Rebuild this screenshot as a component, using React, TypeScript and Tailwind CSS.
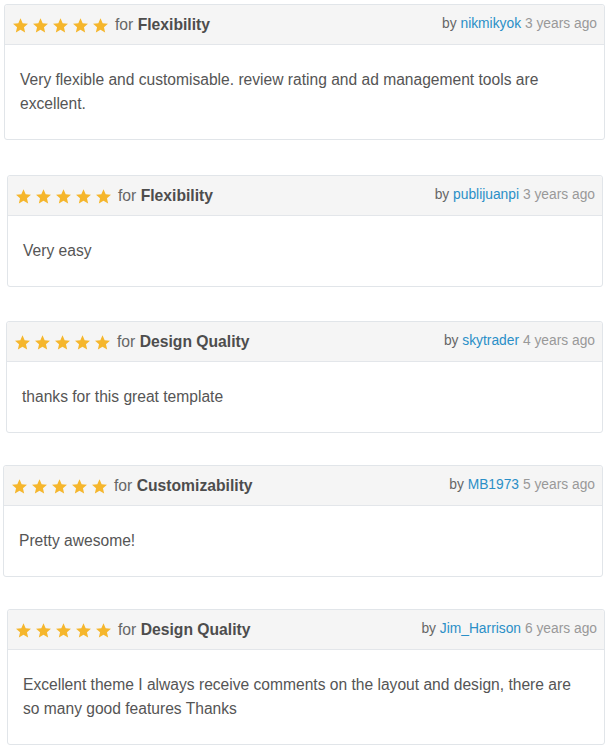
import React from 'react';

interface Review {
  rating: number;
  category: string;
  author: string;
  ago: string;
  text: string;
  wrap: string;
}

const reviews: Review[] = [
  {
    rating: 5,
    category: 'Flexibility',
    author: 'nikmikyok',
    ago: '3 years ago',
    text: 'Very flexible and customisable. review rating and ad management tools are excellent.',
    wrap: 'mt-[4px] ml-[4px] w-[601px]',
  },
  {
    rating: 5,
    category: 'Flexibility',
    author: 'publijuanpi',
    ago: '3 years ago',
    text: 'Very easy',
    wrap: 'mt-[35px] ml-[7px] w-[596px]',
  },
  {
    rating: 5,
    category: 'Design Quality',
    author: 'skytrader',
    ago: '4 years ago',
    text: 'thanks for this great template',
    wrap: 'mt-[34px] ml-[6px] w-[597px]',
  },
  {
    rating: 5,
    category: 'Customizability',
    author: 'MB1973',
    ago: '5 years ago',
    text: 'Pretty awesome!',
    wrap: 'mt-[32px] ml-[3px] w-[600px]',
  },
  {
    rating: 5,
    category: 'Design Quality',
    author: 'Jim_Harrison',
    ago: '6 years ago',
    text: 'Excellent theme I always receive comments on the layout and design, there are so many good features Thanks',
    wrap: 'mt-[32px] ml-[7px] w-[598px]',
  },
];

const Star = () => (
  <svg width="17" height="17" viewBox="0 0 24 24" className="shrink-0">
    <path
      d="M12 1.8l3.05 6.9 7.5.72-5.66 5 1.66 7.38L12 17.95 5.45 21.8l1.66-7.38-5.66-5 7.5-.72z"
      fill="#f5b62c"
    />
  </svg>
);

const ReviewCard: React.FC<{ review: Review }> = ({ review }) => (
  <div className={`${review.wrap} border border-[#e1e5e9] rounded-[3px] bg-white`}>
    <div className="flex items-center justify-between bg-[#f5f5f5] border-b border-[#e3e6ea] pl-[7px] pr-[7px] pt-[10px] pb-[9px] rounded-t-[3px]">
      <div className="flex items-center">
        <div className="flex items-center gap-[3px] pt-[1px]">
          {Array.from({ length: review.rating }).map((_, i) => (
            <Star key={i} />
          ))}
        </div>
        <span className="ml-[6px] text-[15.7px] leading-[20px] text-[#666]">
          for <b className="font-bold text-[#4d4d4d]">{review.category}</b>
        </span>
      </div>
      <span className="text-[13.8px] leading-[20px] text-[#666] -mt-[2px]">
        by <a className="text-[#2a8fc7]">{review.author}</a> <span className="text-[#999]">{review.ago}</span>
      </span>
    </div>
    <div className="px-[15px] pt-[23px] pb-[23px] text-[15.6px] leading-[24px] text-[#555]">{review.text}</div>
  </div>
);

export default function App() {
  return (
    <div className="w-[612px] h-[750px] bg-white flex flex-col overflow-hidden font-['Liberation_Sans',Arial,sans-serif]">
      {reviews.map((r, i) => (
        <ReviewCard key={i} review={r} />
      ))}
    </div>
  );
}
